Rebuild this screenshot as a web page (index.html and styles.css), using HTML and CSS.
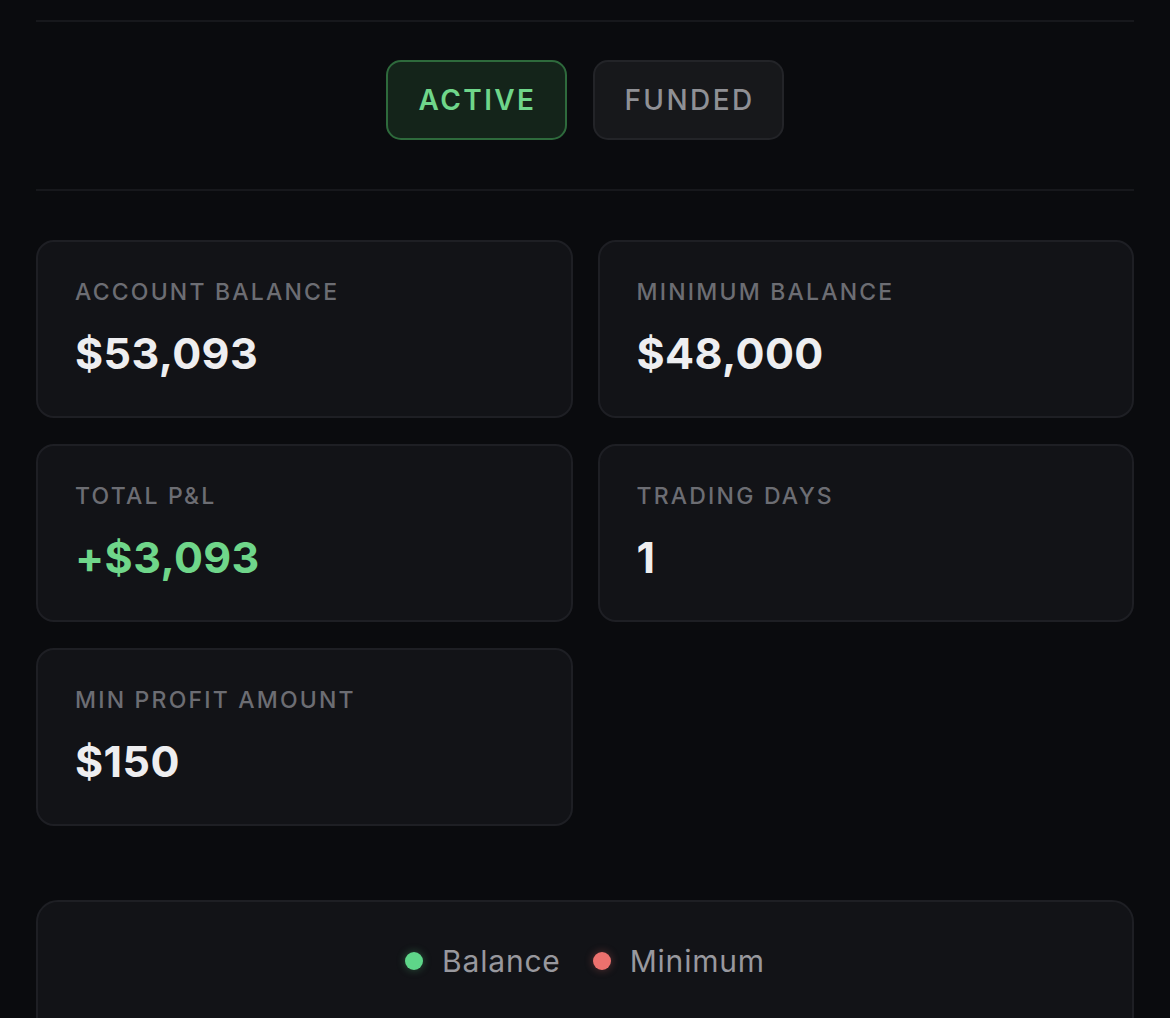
FILE: index.html
```html
<!DOCTYPE html>
<html>
<head>
<meta charset="utf-8">
<link rel="stylesheet" href="styles.css">
</head>
<body>
<div class="page">
  <div class="divider first"></div>
  <div class="tabs">
    <button class="tab tab-active">ACTIVE</button>
    <button class="tab">FUNDED</button>
  </div>
  <div class="divider"></div>
  <div class="grid">
    <div class="card">
      <div class="label">ACCOUNT BALANCE</div>
      <div class="value">$53,093</div>
    </div>
    <div class="card">
      <div class="label">MINIMUM BALANCE</div>
      <div class="value">$48,000</div>
    </div>
    <div class="card">
      <div class="label">TOTAL P&amp;L</div>
      <div class="value positive">+$3,093</div>
    </div>
    <div class="card">
      <div class="label">TRADING DAYS</div>
      <div class="value">1</div>
    </div>
    <div class="card">
      <div class="label">MIN PROFIT AMOUNT</div>
      <div class="value">$150</div>
    </div>
  </div>
  <div class="chart-card">
    <div class="legend">
      <span class="legend-item"><span class="dot dot-green"></span>Balance</span>
      <span class="legend-item"><span class="dot dot-red"></span>Minimum</span>
    </div>
  </div>
</div>
</body>
</html>
```

FILE: styles.css
```css
html, body {
  margin: 0;
  padding: 0;
  background: #0a0b0e;
  font-family: Inter, "Noto Sans", sans-serif;
  color: #eeeef0;
}
.page {
  padding: 0 36px;
  height: 1018px;
  overflow: hidden;
}
.divider {
  height: 2px;
  background: #17181c;
}
.divider.first {
  margin-top: 20px;
}
.tabs {
  display: flex;
  justify-content: center;
  gap: 26px;
  padding: 38px 0 49px 0;
}
.tab {
  height: 80px;
  box-sizing: border-box;
  border-radius: 15px;
  font-family: Inter, "Noto Sans", sans-serif;
  font-size: 28px;
  letter-spacing: 2.4px;
  padding: 0 0 0 2px;
  background: #17181b;
  border: 2px solid #232428;
  color: #8f9095;
  font-weight: 500;
  width: 191px;
}
.tab-active {
  width: 181px;
  background: #14241a;
  border-color: #2e6a3c;
  color: #6fd68a;
  font-weight: 600;
}
.grid {
  display: grid;
  grid-template-columns: 1fr 1fr;
  gap: 26px 25px;
  margin-top: 49px;
}
.card {
  background: #121317;
  border: 2px solid #1e1f24;
  border-radius: 18px;
  height: 178px;
  box-sizing: border-box;
  padding: 36px 38px 0 37px;
}
.label {
  font-size: 23px;
  font-weight: 500;
  letter-spacing: 2.2px;
  color: #6c6d73;
  line-height: 28px;
}
.value {
  font-size: 43px;
  font-weight: 700;
  letter-spacing: 0.4px;
  line-height: 50px;
  margin-top: 22px;
  color: #eeeef0;
}
.value.positive {
  color: #6fd68a;
}
.chart-card {
  margin-top: 74px;
  background: #121317;
  border: 2px solid #1e1f24;
  border-radius: 22px;
  height: 200px;
  box-sizing: border-box;
  padding-top: 41px;
}
.legend {
  display: flex;
  justify-content: center;
  gap: 32px;
}
.legend-item {
  display: flex;
  align-items: center;
  gap: 19px;
  font-size: 30px;
  letter-spacing: 0.8px;
  color: #98989e;
  line-height: 36px;
}
.dot {
  width: 18px;
  height: 18px;
  border-radius: 50%;
  display: inline-block;
}
.dot-green {
  background: #5ed689;
  box-shadow: 0 0 8px rgba(94, 214, 137, 0.35);
}
.dot-red {
  background: #ec716e;
  box-shadow: 0 0 8px rgba(236, 113, 110, 0.35);
}
```
